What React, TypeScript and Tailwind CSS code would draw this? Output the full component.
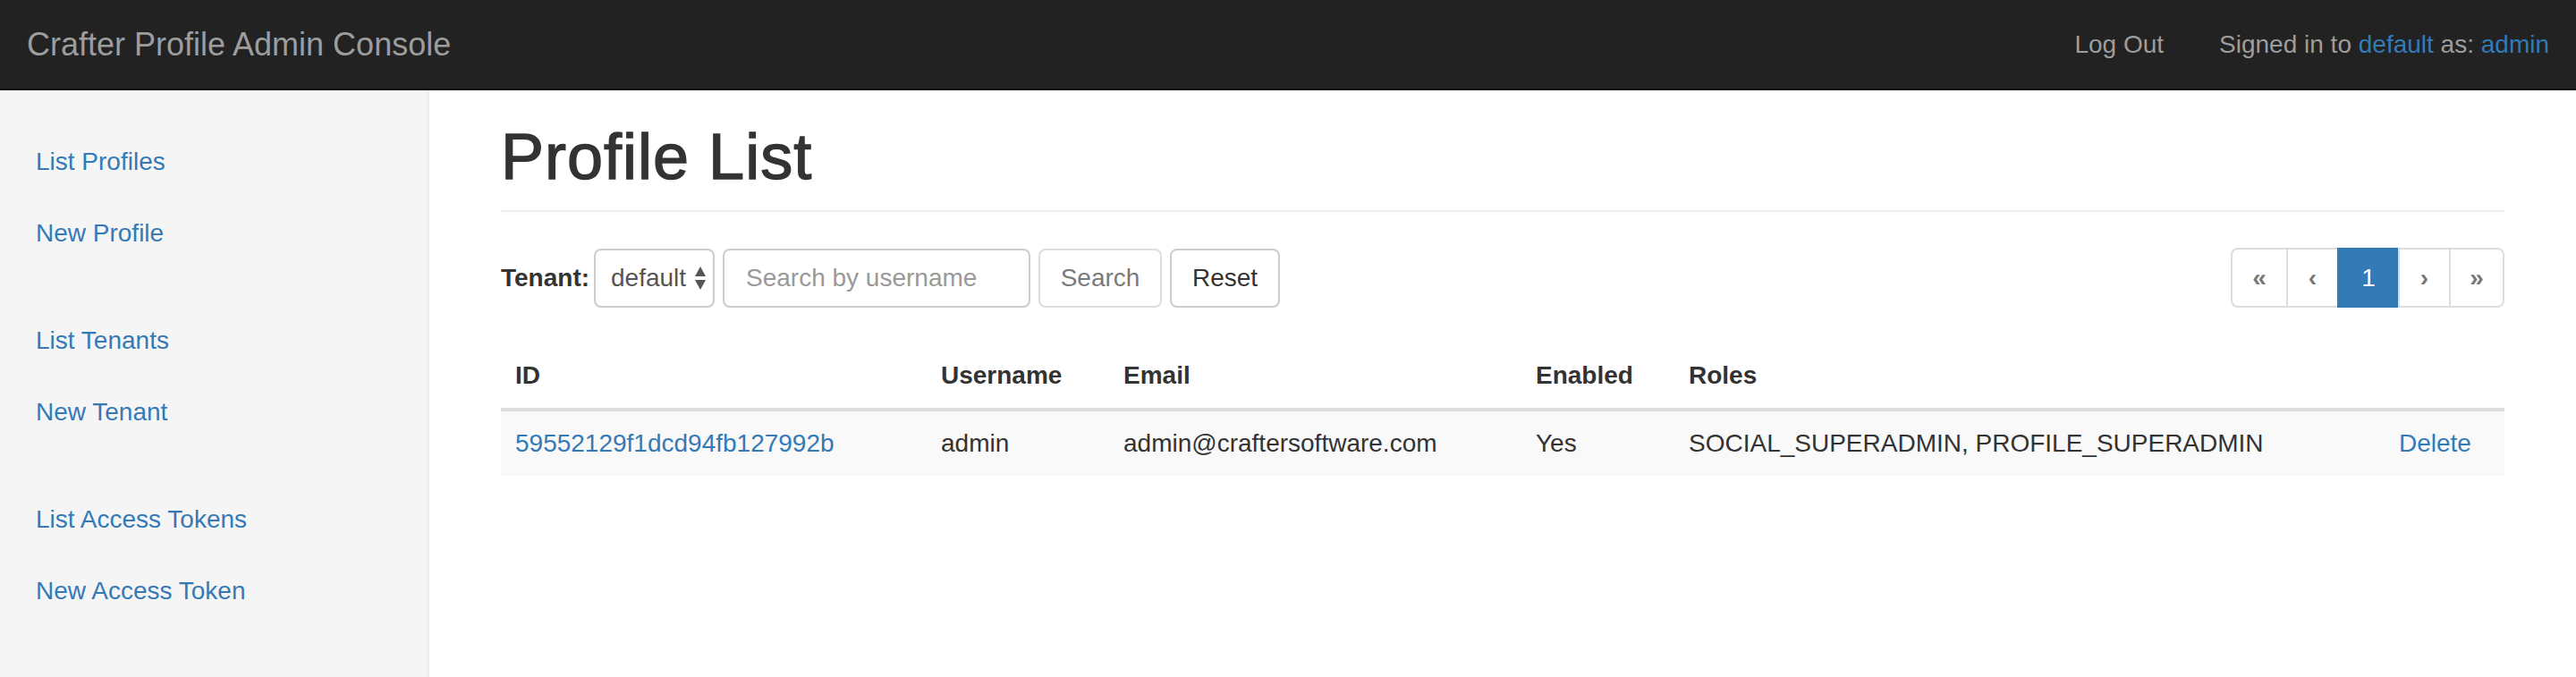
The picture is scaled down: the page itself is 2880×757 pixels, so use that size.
const sidebarGroups = [
  ['List Profiles', 'New Profile'],
  ['List Tenants', 'New Tenant'],
  ['List Access Tokens', 'New Access Token'],
];

function SelectArrows() {
  return (
    <svg width="14" height="26" viewBox="0 0 14 26" className="ml-[9px]">
      <path d="M7 0 L13 11 L1 11 Z" fill="#555" />
      <path d="M1 15 L13 15 L7 26 Z" fill="#555" />
    </svg>
  );
}

function Pagination() {
  const items = [
    { label: '«', w: 'w-[62px]', first: true },
    { label: '‹', w: 'w-[57px]' },
    { label: '1', w: 'w-[68px]', active: true },
    { label: '›', w: 'w-[57px]' },
    { label: '»', w: 'w-[62px]', last: true },
  ];
  return (
    <ul className="flex h-[67px]">
      {items.map((it) => (
        <li
          key={it.label}
          className={[
            'flex items-center justify-center border-y-2 text-[28px]',
            it.w,
            it.first ? 'border-l-2 rounded-l-[8px]' : '',
            it.last ? 'border-x-2 rounded-r-[8px]' : '',
            !it.first && !it.last ? 'border-l-2' : '',
            it.active
              ? 'bg-[#337ab7] border-[#337ab7] text-white'
              : 'bg-white border-[#ddd] text-[#777] font-bold',
          ].join(' ')}
        >
          {it.label}
        </li>
      ))}
    </ul>
  );
}

export default function App() {
  return (
    <div className="min-h-screen flex flex-col font-['Liberation_Sans',Arial,sans-serif] text-[#333] bg-white">
      {/* Navbar */}
      <nav className="h-[101px] shrink-0 bg-[#222] border-b-2 border-[#080808] flex items-center justify-between px-[30px]">
        <a className="text-[36px] leading-[40px] text-[#9d9d9d]">Crafter Profile Admin Console</a>
        <div className="flex items-center text-[28px] leading-[40px] text-[#9d9d9d]">
          <a>Log Out</a>
          <p className="ml-[62px]">
            Signed in to <a className="text-[#337ab7]">default</a> as:{' '}
            <a className="text-[#337ab7]">admin</a>
          </p>
        </div>
      </nav>

      <div className="flex flex-1">
        {/* Sidebar */}
        <aside className="w-[480px] shrink-0 bg-[#f5f5f5] border-r-2 border-[#eee] pt-[40px]">
          {sidebarGroups.map((group, i) => (
            <ul key={i} className="mb-[40px]">
              {group.map((label) => (
                <li key={label} className="h-[80px] flex items-center pl-[40px]">
                  <a className="text-[28px] leading-[40px] text-[#337ab7]">{label}</a>
                </li>
              ))}
            </ul>
          ))}
        </aside>

        {/* Main */}
        <main className="flex-1 px-[80px] pt-[35px]">
          <div className="border-b-2 border-[#eee] pb-[20px]">
            <h1 className="text-[72px] leading-[79px] tracking-[1px] text-[#333] [-webkit-text-stroke:1.4px_#333]">
              Profile List
            </h1>
          </div>

          <div className="mt-[40px] flex items-start justify-between">
            <form className="flex items-center h-[67px]">
              <label className="w-[104px] text-[28px] font-bold">Tenant:</label>
              <div className="w-[135px] h-[66px] border-2 border-[#ccc] rounded-[8px] flex items-center pl-[17px] text-[28px] text-[#555]">
                default
                <SelectArrows />
              </div>
              <input
                className="ml-[9px] w-[344px] h-[66px] border-2 border-[#ccc] rounded-[8px] px-[24px] text-[28px] text-[#555] placeholder:text-[#999] outline-none"
                placeholder="Search by username"
              />
              <button
                type="button"
                className="ml-[9px] w-[138px] h-[66px] border-2 border-[#ccc] rounded-[8px] bg-white text-[28px] text-[#333] opacity-65"
              >
                Search
              </button>
              <button
                type="button"
                className="ml-[9px] w-[123px] h-[66px] border-2 border-[#ccc] rounded-[8px] bg-white text-[28px] text-[#333]"
              >
                Reset
              </button>
            </form>
            <Pagination />
          </div>

          <table className="mt-[40px] w-full table-fixed border-separate border-spacing-0 text-[28px] leading-[40px]">
            <thead>
              <tr className="text-left">
                <th className="w-[476px] p-[16px] border-b-4 border-[#ddd] font-bold">ID</th>
                <th className="w-[204px] p-[16px] border-b-4 border-[#ddd] font-bold">Username</th>
                <th className="w-[461px] p-[16px] border-b-4 border-[#ddd] font-bold">Email</th>
                <th className="w-[171px] p-[16px] border-b-4 border-[#ddd] font-bold">Enabled</th>
                <th className="w-[794px] p-[16px] border-b-4 border-[#ddd] font-bold">Roles</th>
                <th className="p-[16px] border-b-4 border-[#ddd]"></th>
              </tr>
            </thead>
            <tbody>
              <tr className="bg-[#f9f9f9]">
                <td className="p-[16px]">
                  <a className="text-[#337ab7]">59552129f1dcd94fb127992b</a>
                </td>
                <td className="p-[16px]">admin</td>
                <td className="p-[16px]">admin@craftersoftware.com</td>
                <td className="p-[16px]">Yes</td>
                <td className="p-[16px]">SOCIAL_SUPERADMIN, PROFILE_SUPERADMIN</td>
                <td className="p-[16px]">
                  <a className="text-[#337ab7]">Delete</a>
                </td>
              </tr>
            </tbody>
          </table>
        </main>
      </div>
    </div>
  );
}
